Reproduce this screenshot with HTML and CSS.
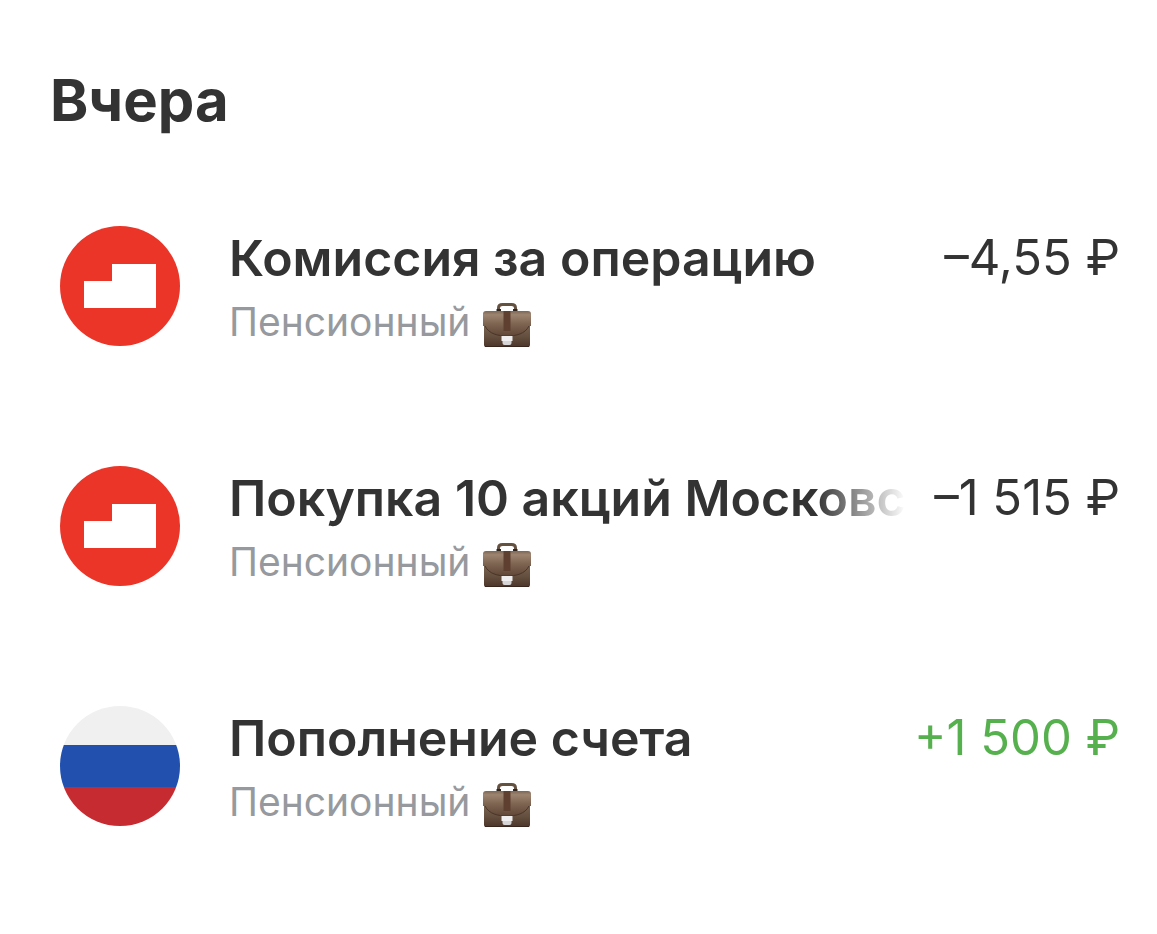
FILE: index.html
```html
<!DOCTYPE html>
<html lang="ru">
<head>
<meta charset="utf-8">
<meta name="viewport" content="width=device-width, initial-scale=1">
<title>Операции</title>
<link rel="stylesheet" href="styles.css">
</head>
<body>
<svg class="defs" aria-hidden="true">
  <defs>
    <linearGradient id="lid" x1="0" y1="0" x2="0" y2="1">
      <stop offset="0" stop-color="#7d6654"/>
      <stop offset="0.15" stop-color="#9c8470"/>
      <stop offset="0.5" stop-color="#7f6653"/>
      <stop offset="1" stop-color="#5f4636"/>
    </linearGradient>
    <linearGradient id="body" x1="0" y1="0" x2="0" y2="1">
      <stop offset="0" stop-color="#806a5a"/>
      <stop offset="0.6" stop-color="#65503f"/>
      <stop offset="1" stop-color="#4b3529"/>
    </linearGradient>
  </defs>
  <symbol id="logo" viewBox="0 0 120 120">
    <circle cx="60" cy="60" r="60" fill="#ea3528"/>
    <path d="M24 55H52V38H96V82H24Z" fill="#fff"/>
  </symbol>
  <symbol id="case" viewBox="0 0 50 52">
    <path d="M16.500 15V12Q16.500 8.500 20.500 8.500H29.500Q33.500 8.500 33.500 12V15" fill="none" stroke="#65513f" stroke-width="3"/>
    <path d="M14.500 14H19M31 14H35.500" stroke="#2d241e" stroke-width="2"/>
    <path d="M2 24V49Q2 51 4 51H46Q48 51 48 49V24Z" fill="url(#body)"/>
    <path d="M4 15H46Q49 15 49 18V30H47C43 38 34 40 25 40S7 38 3 30H1V18Q1 15 4 15Z" fill="url(#lid)"/>
    <path d="M3 30C7 38 16 40 25 40S43 38 47 30" fill="none" stroke="#4b3528" stroke-width="1"/>
    <path d="M21.500 15H28.500V35H21.500Z" fill="#5f4030"/>
    <path d="M20.500 42H29.500V47Q29.500 49 27.500 49H22.500Q20.500 49 20.500 47Z" fill="#d8d5d6"/>
    <path d="M19.500 40H30.500V45H19.500Z" fill="#f0eeee"/>
    <path d="M3 50.500H47" stroke="#38251b" stroke-width="1"/>
  </symbol>
</svg>
<main class="history">
  <h1 class="day">Вчера</h1>
  <ul class="list">
    <li class="row">
      <svg class="icon" aria-hidden="true"><use href="#logo"/></svg>
      <div class="info">
        <div class="title">Комиссия за операцию</div>
        <div class="account">Пенсионный <svg class="case" aria-hidden="true"><use href="#case"/></svg></div>
      </div>
      <div class="amount">–4,55 ₽</div>
    </li>
    <li class="row">
      <svg class="icon" aria-hidden="true"><use href="#logo"/></svg>
      <div class="info">
        <div class="title title-faded">Покупка 10 акций Московс</div>
        <div class="account">Пенсионный <svg class="case" aria-hidden="true"><use href="#case"/></svg></div>
      </div>
      <div class="amount">–1 515 ₽</div>
    </li>
    <li class="row">
      <svg class="icon" viewBox="0 0 120 120" aria-hidden="true">
        <clipPath id="round"><circle cx="60" cy="60" r="60"/></clipPath>
        <g clip-path="url(#round)">
          <rect width="120" height="40" fill="#f0f0f0"/>
          <rect y="39" width="120" height="42" fill="#2150ae"/>
          <rect y="81" width="120" height="39" fill="#c62b31"/>
        </g>
      </svg>
      <div class="info">
        <div class="title">Пополнение счета</div>
        <div class="account">Пенсионный <svg class="case" aria-hidden="true"><use href="#case"/></svg></div>
      </div>
      <div class="amount amount-income">+1 500 ₽</div>
    </li>
  </ul>
</main>
</body>
</html>
```
FILE: styles.css
```css
* { box-sizing: border-box; }

body {
  margin: 0;
  background: #fff;
  color: #333;
  font-family: Inter, "Liberation Sans", sans-serif;
}

.defs {
  position: absolute;
  width: 0;
  height: 0;
}

.history { padding: 65px 37px 48px 50px; }

.day {
  margin: 0;
  font-size: 58px;
  line-height: 70px;
  font-weight: 700;
}

.list {
  display: grid;
  grid-template-columns: minmax(0, 1fr);
  gap: 116px;
  margin: 91px 0 0;
  padding: 0;
  list-style: none;
}

.row {
  display: flex;
  align-items: flex-start;
  padding-left: 10px;
}

.icon {
  flex: none;
  width: 120px;
  height: 120px;
  margin-right: 49px;
}

.info {
  flex: 1;
  min-width: 0;
}

.title {
  overflow: hidden;
  font-size: 50px;
  line-height: 64px;
  font-weight: 600;
  white-space: nowrap;
}

.title-faded {
  -webkit-mask-image: linear-gradient(to left, transparent, #000 90px);
  mask-image: linear-gradient(to left, transparent, #000 90px);
}

.account {
  display: flex;
  align-items: center;
  gap: 12px;
  margin-top: 4px;
  font-size: 39px;
  line-height: 56px;
  color: #96999e;
}

.case {
  width: 50px;
  height: 52px;
}

.amount {
  margin-left: 28px;
  font-size: 49px;
  line-height: 64px;
  white-space: nowrap;
}

.amount-income { color: #55b04d; }
```
